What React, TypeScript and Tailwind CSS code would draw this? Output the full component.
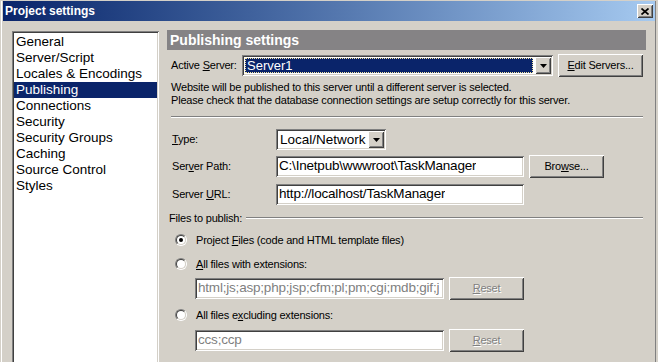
import React from "react";

const sunken =
  "shadow-[inset_1px_1px_0_#808080,inset_-1px_-1px_0_#ffffff,inset_2px_2px_0_#404040,inset_-2px_-2px_0_#d4d0c8]";
const raised =
  "shadow-[inset_1px_1px_0_#ffffff,inset_-1px_-1px_0_#404040,inset_2px_2px_0_#d4d0c8,inset_-2px_-2px_0_#808080]";

function DropBtn() {
  return (
    <div className={`w-[16px] h-[17px] bg-[#d4d0c8] ${raised} flex items-center justify-center shrink-0`}>
      <svg width="7" height="4" viewBox="0 0 7 4">
        <polygon points="0,0 7,0 3.5,4" fill="#000" />
      </svg>
    </div>
  );
}

function Button({ children, w, disabled }: { children: React.ReactNode; w: string; disabled?: boolean }) {
  return (
    <div
      className={`${w} h-[23px] bg-[#d4d0c8] ${raised} flex items-center justify-center text-[11px] tracking-[-0.2px] shrink-0 ${
        disabled ? "text-[#808080] [text-shadow:1px_1px_0_#ffffff]" : "text-black"
      }`}
    >
      {children}
    </div>
  );
}

function Radio({ checked }: { checked?: boolean }) {
  return (
    <div className="w-[12px] h-[12px] rounded-full border border-t-[#808080] border-l-[#808080] border-r-white border-b-white shrink-0">
      <div className="w-full h-full rounded-full border border-t-[#404040] border-l-[#404040] border-r-[#d4d0c8] border-b-[#d4d0c8] bg-white flex items-center justify-center">
        {checked && <div className="w-[4px] h-[4px] rounded-full bg-black" />}
      </div>
    </div>
  );
}

function Field({ w, children, disabled }: { w: string; children: React.ReactNode; disabled?: boolean }) {
  return (
    <div
      className={`${w} h-[21px] bg-white ${sunken} pl-[3px] pr-[2px] flex items-center overflow-hidden whitespace-nowrap text-[13.5px] shrink-0 ${
        disabled ? "text-[#808080]" : "text-black"
      }`}
    >
      <span className="overflow-hidden">{children}</span>
    </div>
  );
}

const items = [
  "General",
  "Server/Script",
  "Locales & Encodings",
  "Publishing",
  "Connections",
  "Security",
  "Security Groups",
  "Caching",
  "Source Control",
  "Styles",
];

export default function App() {
  return (
    <div className="w-[658px] h-[362px] bg-[#d4d0c8] overflow-hidden pl-[1px] pt-[1px] font-['Liberation_Sans',Arial,sans-serif] text-black">
      <div className="w-[655px] h-[400px] border-l border-white border-r border-r-[#808080] flex flex-col">
        {/* Title bar */}
        <div className="ml-[1px] w-[652px] h-[20px] bg-linear-to-r from-[#0a246a] to-[#a6caf0] flex items-center justify-between pl-[2px] pr-[2px]">
          <span className="text-white font-bold text-[12px] leading-none">Project settings</span>
          <div className={`w-[16px] h-[14px] bg-[#d4d0c8] ${raised} flex items-center justify-center`}>
            <svg width="8" height="7" viewBox="0 0 8 7">
              <path d="M0.5 0.5 L7.5 6.5 M7.5 0.5 L0.5 6.5" stroke="#000" strokeWidth="1.7" />
            </svg>
          </div>
        </div>

        {/* Content */}
        <div className="mt-[9px] pl-[10px] flex">
          {/* List */}
          <div className={`mt-[1px] w-[147px] h-[340px] bg-white ${sunken} p-[2px]`}>
            <div className="pt-[1px]">
              {items.map((it) => (
                <div
                  key={it}
                  className={`h-[16px] leading-[16px] px-[2px] text-[13.5px] whitespace-nowrap ${
                    it === "Publishing" ? "bg-[#0a246a] text-white" : "text-black"
                  }`}
                >
                  {it}
                </div>
              ))}
            </div>
          </div>

          {/* Right panel */}
          <div className="ml-[8px] w-[479px] flex flex-col text-[11px] tracking-[-0.2px]">
            <div className="h-[20px] bg-[#858385] text-white font-bold text-[14px] tracking-normal leading-[20px] pl-[3px]">
              Publishing settings
            </div>

            <div className="mt-[4px] h-[23px] flex items-center">
              <div className="w-[75px] pl-[4px]">
                Active <u>S</u>erver:
              </div>
              <div className={`w-[311px] h-[21px] bg-white ${sunken} p-[2px] flex`}>
                <div className="flex-1 p-[1px] pr-[2px]">
                  <div className="h-full bg-[#0a246a] border border-dotted border-[#f5e6a0] text-white text-[13px] tracking-normal leading-[13px] pl-[1px]">
                    Server1
                  </div>
                </div>
                <DropBtn />
              </div>
              <div className="ml-[5px]">
                <Button w="w-[85px]">
                  <span>
                    <u>E</u>dit Servers...
                  </span>
                </Button>
              </div>
            </div>

            <div className="mt-[4px] pl-[4px] leading-[13px]">
              <div>Website will be published to this server until a different server is selected.</div>
              <div>Please check that the database connection settings are setup correctly for this server.</div>
            </div>

            <div className="mt-[9px] ml-[4px] w-[472px] h-[2px] border-t border-[#808080] border-b border-b-white" />

            <div className="mt-[11px] h-[21px] flex items-center">
              <div className="w-[109px] pl-[5px]">
                <u>T</u>ype:
              </div>
              <div className={`w-[110px] h-[21px] bg-white ${sunken} p-[2px] flex`}>
                <div className="flex-1 pl-[2px] text-[13.5px] tracking-normal leading-[17px] whitespace-nowrap">
                  Local/Network
                </div>
                <DropBtn />
              </div>
            </div>

            <div className="mt-[5px] h-[23px] flex items-center">
              <div className="w-[109px] pl-[5px]">
                Ser<u>v</u>er Path:
              </div>
              <Field w="w-[248px]">C:\Inetpub\wwwroot\TaskManager</Field>
              <div className="ml-[5px]">
                <Button w="w-[75px]">
                  <span>
                    Bro<u>w</u>se...
                  </span>
                </Button>
              </div>
            </div>

            <div className="mt-[6px] h-[21px] flex items-center">
              <div className="w-[109px] pl-[5px]">
                Server <u>U</u>RL:
              </div>
              <Field w="w-[248px]">http://localhost/TaskManager</Field>
            </div>

            <div className="mt-[6px] h-[14px] flex items-center pl-[2px] pr-[3px]">
              <span className="whitespace-nowrap">Files to publish:</span>
              <div className="ml-[4px] flex-1 h-[2px] border-t border-[#808080] border-b border-b-white" />
            </div>

            <div className="mt-[7px] h-[16px] flex items-center pl-[8px]">
              <Radio checked />
              <span className="ml-[9px]">
                Project <u>F</u>iles (code and HTML template files)
              </span>
            </div>

            <div className="mt-[8px] h-[16px] flex items-center pl-[8px]">
              <Radio />
              <span className="ml-[9px]">
                <u>A</u>ll files with extensions:
              </span>
            </div>

            <div className="mt-[5px] h-[23px] flex items-center pl-[28px]">
              <Field w="w-[249px]" disabled>
                html;js;asp;php;jsp;cfm;pl;pm;cgi;mdb;gif;j
              </Field>
              <div className="ml-[5px]">
                <Button w="w-[75px]" disabled>
                  <span>
                    <u>R</u>eset
                  </span>
                </Button>
              </div>
            </div>

            <div className="mt-[7px] h-[16px] flex items-center pl-[8px]">
              <Radio />
              <span className="ml-[9px]">
                All files e<u>x</u>cluding extensions:
              </span>
            </div>

            <div className="mt-[6px] h-[23px] flex items-center pl-[28px]">
              <Field w="w-[249px]" disabled>
                ccs;ccp
              </Field>
              <div className="ml-[5px]">
                <Button w="w-[75px]" disabled>
                  <span>
                    <u>R</u>eset
                  </span>
                </Button>
              </div>
            </div>
          </div>
        </div>
      </div>
    </div>
  );
}
